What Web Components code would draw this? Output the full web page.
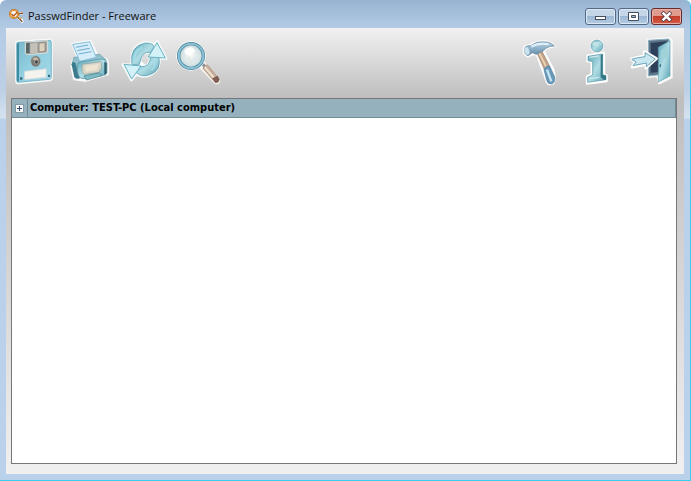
<!DOCTYPE html>
<html lang="en">
<head>
<meta charset="utf-8">
<title>PasswdFinder - Freeware</title>
<style>
  html, body { height: 100%; margin: 0; }
  body { font: 11px/16px "Open Sans", "Noto Sans", sans-serif; color: #111; }
</style>
</head>
<body>
<app-window>
  <title-bar slot="title">PasswdFinder - Freeware</title-bar>
  <tool-bar slot="tools">
    <tool-button icon="save" label="Save"></tool-button>
    <tool-button icon="print" label="Print"></tool-button>
    <tool-button icon="refresh" label="Refresh"></tool-button>
    <tool-button icon="search" label="Search"></tool-button>
    <tool-button slot="end" icon="hammer" label="Options"></tool-button>
    <tool-button slot="end" icon="info" label="About"></tool-button>
    <tool-button slot="end" icon="exit" label="Exit"></tool-button>
  </tool-bar>
  <result-list>
    <result-group>Computer: TEST-PC (Local computer)</result-group>
  </result-list>
</app-window>

<script>
// toolbar drawings, all on a 162 x 168 grid
const icons = {
  save: `
    <path d="M24 26Q24 22 30 22L126 16Q132 16 132 23V132Q132 138 126 139L32 148Q24 149 24 141Z" fill="#fff" stroke="#f8fafa" stroke-width="5"/>
    <path d="M26 29Q26 25 31 25L125 19Q130 19 130 25V130Q130 135 125 136L32 145Q26 146 26 139Z" fill="url(#disk)" stroke="#5b9fb3" stroke-width="2"/>
    <path d="M27 30V140L33 144V26Z" fill="#3b8ca3"/>
    <path d="M52 24L119 20V51Q119 57 112 57L59 62Q52 62 52 56Z" fill="#a4a8a6" stroke="#deded9" stroke-width="3"/>
    <path d="M54 27L65 26V58L54 58Z" fill="#59676b"/><path d="M67 29L88 27V56L67 58Z" fill="#c5c1b8"/>
    <path d="M93 27L111 26V52L93 54Z" fill="#ddd0bd" stroke="#77736b" stroke-width="2"/>
    <ellipse cx="83" cy="82" rx="15" ry="17" fill="#777a76" stroke="#a6c5c9" stroke-width="2"/>
    <path d="M73 76Q82 64 92 75L85 81Z" fill="#c6b6a6"/><circle cx="85" cy="84" r="6" fill="#39474b" stroke="#c2b5a6" stroke-width="2"/>
    <path d="M49 112L115 104V130L49 137Z" fill="#f4f3ed" stroke="#c8d6d5" stroke-width="2"/>
    <path d="M36 130H43V137H36ZM120 122H126V129H120Z" fill="#37687a"/>`,
  print: `
    <path d="M31 29L85 20L107 66L131 74Q138 78 138 95V121L112 128L70 140L36 136L28 96L32 79L46 70Z" fill="#fff" stroke="#fafafa" stroke-width="6" stroke-linejoin="round"/>
    <path d="M36 70L112 61L132 77L130 92L43 100L29 93Z" fill="#8fc0cc" stroke="#5c98a8" stroke-width="2"/>
    <path d="M32 31L83 23L103 70L53 82Z" fill="#d5edf9" stroke="#86bfdb" stroke-width="3"/>
    <path d="M42 40L78 33M46 50L83 43M50 60L88 53" stroke="#70abd0" stroke-width="3"/>
    <path d="M29 92Q31 79 40 88L54 132Q45 138 37 130Z" fill="#3b7c8c"/>
    <path d="M46 91Q48 84 60 83L121 75Q134 76 135 88V116Q134 123 125 124L65 134Q50 136 46 112Z" fill="url(#g)" stroke="#568e9c" stroke-width="2"/>
    <path d="M61 91L116 83Q121 85 118 103L111 115L68 121Q57 119 61 91Z" fill="#d9d6c7" stroke="#899b99" stroke-width="2"/>
    <path d="M70 96L111 90L105 107L72 113Z" fill="#eee4d2"/>
    <path d="M127 83L134 87V117L127 122Z" fill="#2c5c68"/>
    <path d="M66 126L112 117L120 125L73 138Z" fill="#7fbcc6" stroke="#3f7b89" stroke-width="2"/>`,
  refresh: `
    <path d="M48 91Q39 37 85 25Q102 23 113 31L124 22L151 74L98 70L105 58Q78 48 72 82L79 88L86 97Q103 90 103 70L131 71Q133 112 99 125Q79 132 62 122L46 139L20 91Z" fill="#fff" stroke="#f4fafa" stroke-width="7" stroke-linejoin="round"/>
    <path d="M48 92Q39 37 88 27Q109 26 115 38L104 57Q78 46 70 91Z" fill="url(#g)" stroke="#4b93a7" stroke-width="2"/>
    <path d="M128 66Q138 111 101 122Q77 131 61 116L70 97Q104 104 104 64Z" fill="url(#g)" stroke="#4b93a7" stroke-width="2"/>
    <path d="M123 26L148 72L97 69Z" fill="#d3f1f6" stroke="#68b2c3" stroke-width="3"/>
    <path d="M24 91L75 96L47 135Z" fill="#d3f1f6" stroke="#68b2c3" stroke-width="3"/>
    <path d="M56 79Q52 51 79 40M106 108Q119 97 118 79" fill="none" stroke="#a2dce6" stroke-width="6"/>`,
  search: `
    <path d="M92 90L103 87L148 138Q148 150 136 147L91 101Z" fill="#fff" stroke="#f6f4ef" stroke-width="6"/>
    <path d="M90 88L99 85L108 94L102 103Z" fill="#8c9497"/>
    <path d="M98 102L112 92L147 134Q149 146 136 146Z" fill="#c8ac98" stroke="#a18978" stroke-width="2"/>
    <path d="M104 99L136 136" stroke="#f0e2d1" stroke-width="6"/><path d="M127 133L143 125L148 136Q147 147 136 146Z" fill="#7f5d52"/>
    <circle cx="63" cy="66" r="40" fill="#fff" stroke="#fff" stroke-width="8"/>
    <circle cx="63" cy="66" r="37" fill="url(#glass)" stroke="#45849c" stroke-width="10"/>
    <circle cx="63" cy="66" r="37" fill="none" stroke="#8cc0d3" stroke-width="6"/>
    <path d="M43 50Q52 38 66 40L76 50L64 62Q45 68 43 50Z" fill="#fff"/>
    <path d="M45 81L59 70L62 84L75 70L84 80" fill="none" stroke="#dfe7e7" stroke-width="4"/>`,
  hammer: `
    <path d="M25 38L44 31L62 23Q102 17 116 37L94 42L84 52L112 106Q122 139 111 149Q98 155 92 144L62 61L49 62L36 68Q17 60 25 38Z" fill="#fff" stroke="#fafafa" stroke-width="6" stroke-linejoin="round"/>
    <path d="M63 56L77 50L100 95L85 106Z" fill="#c5a387" stroke="#96775f" stroke-width="2"/>
    <path d="M69 56L91 99" stroke="#ead5b9" stroke-width="5"/>
    <path d="M84 107Q89 94 101 96L116 129Q119 147 105 150Q95 150 92 138Z" fill="#6899b9" stroke="#527f9f" stroke-width="2"/>
    <path d="M93 107L106 142" stroke="#c6e5f2" stroke-width="7"/>
    <path d="M27 40Q34 34 44 35L62 25Q101 19 115 36Q101 35 90 43L81 51L61 61L49 56L36 65Q22 60 27 40Z" fill="url(#steel)" stroke="#5b7f98" stroke-width="2"/>
    <path d="M46 38Q66 26 98 31" fill="none" stroke="#e1f0fa" stroke-width="6"/><ellipse cx="33" cy="51" rx="7" ry="12" transform="rotate(-17 33 51)" fill="#c9e4f0"/>`,
  info: `
    <circle cx="81" cy="36" r="21" fill="#fff"/><path d="M53 65L102 57V121L110 125V141L51 149V128L65 121V84L52 81Z" fill="#fff" stroke="#fff" stroke-width="7" stroke-linejoin="round"/>
    <circle cx="81" cy="36" r="18" fill="url(#g)" stroke="#659fac" stroke-width="2"/>
    <ellipse cx="77" cy="30" rx="10" ry="7" fill="#c2e3e5"/>
    <path d="M54 67L98 60V122L108 125V137L53 145V130L68 123V83L54 80Z" fill="url(#g)" stroke="#5593a1" stroke-width="2"/>
    <path d="M92 63L98 60V122L108 125V137L101 138L92 129Z" fill="#357887"/>
    <path d="M58 70L86 66M58 134L88 130" stroke="#cceaeb" stroke-width="4"/>`,
  exit: `
    <path d="M71 18L136 12L143 19V130L106 148L99 126L71 129Z" fill="#fff" stroke="#fafafa" stroke-width="6"/>
    <path d="M73 19L135 15V119L73 126Z" fill="#5b7489" stroke="#8eb2c0" stroke-width="3"/>
    <path d="M80 27L128 22V112L80 116Z" fill="#2d405a"/>
    <path d="M103 40L138 20V126L103 144Z" fill="url(#g)" stroke="#609fad" stroke-width="2"/>
    <path d="M110 49L131 36V70L110 81Z" fill="#a0d2d9"/><path d="M109 91V99" stroke="#39717f" stroke-width="4"/>
    <path d="M22 75L38 71L61 66V53L97 74L66 102V91L25 99L34 85Z" fill="#b9e0eb" stroke="#fff" stroke-width="9" stroke-linejoin="round"/>
    <path d="M23 76L38 72L63 68V56L94 75L67 98V87L27 95L36 84Z" fill="#c8e6ef" stroke="#6ba4b8" stroke-width="3"/>`
};

class ToolButton extends HTMLElement {
  constructor() {
    super();
    this.attachShadow({ mode: 'open' });
  }
  connectedCallback() {
    this.shadowRoot.innerHTML = `
      <style>
        :host { display: block; }
        button { display: block; padding: 0; border: 0; background: none; }
        svg { display: block; width: 54px; height: 56px; }
      </style>
      <button type="button" aria-label="${this.getAttribute('label')}">
        <svg viewBox="0 0 162 168" aria-hidden="true">
          <defs>
            <linearGradient id="g" x1="0" y1="0" x2="1" y2="1"><stop stop-color="#5aa6b9"/><stop offset=".5" stop-color="#b0dde5"/><stop offset="1" stop-color="#5ba3b3"/></linearGradient>
            <linearGradient id="disk" x1="0" y1="0" x2="1" y2="1"><stop stop-color="#79b9cb"/><stop offset=".5" stop-color="#91cfe1"/><stop offset="1" stop-color="#a3d9e8"/></linearGradient>
            <linearGradient id="steel" x1="0" y1="0" x2="0" y2="1"><stop stop-color="#b9d5e5"/><stop offset="1" stop-color="#5f89a9"/></linearGradient>
            <radialGradient id="glass"><stop stop-color="#fafaf6"/><stop offset="1" stop-color="#c6dade"/></radialGradient>
          </defs>
          ${icons[this.getAttribute('icon')]}
        </svg>
      </button>`;
  }
}

class ToolBar extends HTMLElement {
  constructor() {
    super();
    this.attachShadow({ mode: 'open' }).innerHTML = `
      <style>
        :host { display: flex; justify-content: space-between; padding: 6px 6px 8px 2px; background: linear-gradient(#f1f1f1, #bebebe); }
        div { display: flex; }
      </style>
      <div><slot></slot></div>
      <div><slot name="end"></slot></div>`;
  }
}

class TitleBar extends HTMLElement {
  constructor() {
    super();
    this.attachShadow({ mode: 'open' }).innerHTML = `
      <style>
        :host { display: flex; align-items: center; height: 28px; box-sizing: border-box; padding: 4px 2px 0; }
        .logo { width: 16px; height: 16px; margin-right: 4px; }
        span { flex: 1; }
        div { display: flex; gap: 2px; }
        button { width: 31px; height: 17px; padding: 0; border: 1px solid #536a86; border-radius: 3px; box-shadow: inset 0 0 0 1px #dce8f4; background: linear-gradient(#c5d6e9 50%, #9db8d4 50%, #b4cbe3); }
        button svg { display: block; margin: auto; width: 13px; height: 11px; }
        .close { border-color: #672b2c; box-shadow: inset 0 0 0 1px #e5ada3; background: linear-gradient(#df9b8d 50%, #c33d2a 50%, #d65c46); }
      </style>
      <svg class="logo" viewBox="0 0 48 48" aria-hidden="true">
        <path d="M27 26L45 43M27 19L45 15M40 37L45 35" stroke="#fff" stroke-width="7"/>
        <path d="M26 25L43 41M27 19L45 15" stroke="#805225" stroke-width="4"/>
        <circle cx="18" cy="18" r="12" fill="#fff" stroke="#b96f25" stroke-width="6"/>
        <circle cx="18" cy="18" r="12" fill="none" stroke="#f0a542" stroke-width="3"/>
        <path d="M10 17L17 24L28 12" fill="none" stroke="#b35b1c" stroke-width="4"/>
        <path d="M4 23L15 27M33 32L41 29" stroke="#e5a340" stroke-width="4"/>
      </svg>
      <span><slot></slot></span>
      <div>
        <button type="button" aria-label="Minimize"><svg viewBox="0 0 26 22"><rect x="3" y="11" width="20" height="6" fill="#fff" stroke="#444d5c" stroke-width="2"/></svg></button>
        <button type="button" aria-label="Maximize"><svg viewBox="0 0 26 22"><path d="M3 3H23V19H3ZM9 9V13H17V9Z" fill="#fff" fill-rule="evenodd" stroke="#444d5c" stroke-width="2"/></svg></button>
        <button class="close" type="button" aria-label="Close"><svg viewBox="0 0 26 22"><path d="M7 5L19 17M19 5L7 17" stroke="#4d3540" stroke-width="8" stroke-linecap="square"/><path d="M7 5L19 17M19 5L7 17" stroke="#fff" stroke-width="5" stroke-linecap="square"/></svg></button>
      </div>`;
  }
}

class ResultGroup extends HTMLElement {
  constructor() {
    super();
    this.attachShadow({ mode: 'open' }).innerHTML = `
      <style>
        :host { display: flex; height: 18px; border-bottom: 1px solid #718b95; background: #94b1bd; font: bold 11px/18px "DejaVu Sans Condensed", "DejaVu Sans", sans-serif; color: #000; }
        .cell { display: grid; place-items: center; width: 15px; border-right: 1px solid #718b95; }
        button { display: block; width: 9px; height: 9px; padding: 0; border: 1px solid #8299a8; background: #f8f8f8; }
        svg { display: block; width: 7px; height: 7px; }
        .name { flex: 1; padding-left: 2px; border-right: 1px solid #718b95; }
      </style>
      <div class="cell"><button type="button" aria-label="Expand" aria-expanded="false">
        <svg viewBox="0 0 7 7"><path d="M1 3H6V4H1ZM3 1H4V6H3Z" fill="#344870"/></svg>
      </button></div>
      <div class="name"><slot></slot></div>`;
  }
}

class ResultList extends HTMLElement {
  constructor() {
    super();
    this.attachShadow({ mode: 'open' }).innerHTML = `
      <style>
        :host { display: block; border: 1px solid #757779; background: #fff; }
      </style>
      <slot></slot>`;
  }
}

class AppWindow extends HTMLElement {
  constructor() {
    super();
    this.attachShadow({ mode: 'open' }).innerHTML = `
      <style>
        :host {
          display: flex; flex-direction: column; box-sizing: border-box; min-height: 100%; padding: 0 6px 6px;
          border: 0 solid #39cdf0; border-width: 0 1px 1px 0; border-radius: 6px 6px 0 0;
          background: linear-gradient(#98b4d2, #b3cbe5 28px, #bdd0e6 90px, #d6e2f0 118px, #b9d1ea 119px);
        }
        main { flex: 1; display: flex; flex-direction: column; background: #f0f0f0; }
        .body { flex: 1; display: flex; flex-direction: column; padding: 0 7px 10px 5px; background: linear-gradient(#bebebe, #f0f0f0); }
        ::slotted(result-list) { flex: 1; }
      </style>
      <slot name="title"></slot>
      <main>
        <slot name="tools"></slot>
        <div class="body"><slot></slot></div>
      </main>`;
  }
}

customElements.define('tool-button', ToolButton);
customElements.define('tool-bar', ToolBar);
customElements.define('title-bar', TitleBar);
customElements.define('result-group', ResultGroup);
customElements.define('result-list', ResultList);
customElements.define('app-window', AppWindow);
</script>
</body>
</html>
